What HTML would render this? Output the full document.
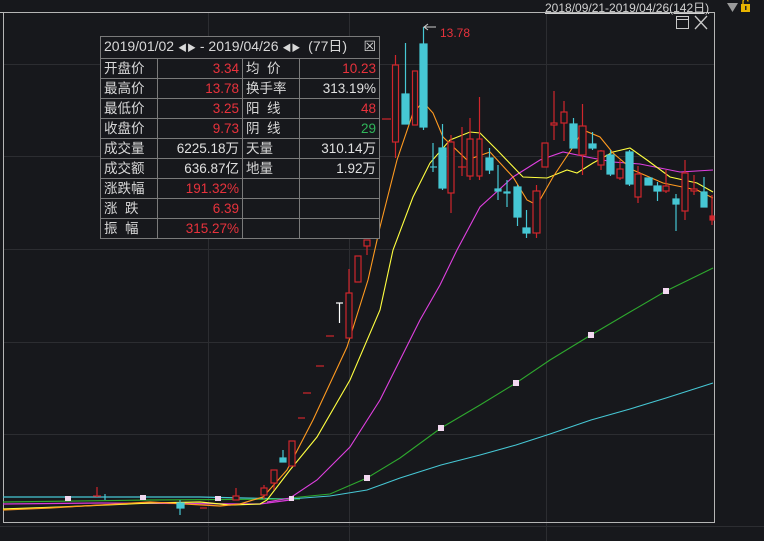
<!DOCTYPE html>
<html><head><meta charset="utf-8"><style>
html,body{margin:0;padding:0;background:#17181c;width:764px;height:541px;overflow:hidden;font-family:"Liberation Sans","Noto Sans CJK SC",sans-serif}
#tb{position:absolute;left:100px;top:36px;width:280px;border-collapse:collapse;font-size:13.5px;color:#d8d8d8;background:#17181c}
#tb td{border:1px solid #7a7a7a;height:19px;padding:0 3px;white-space:nowrap;line-height:19px}
#tb td.r{text-align:right;color:#e8323c}
#tb td.w{text-align:right;color:#e0e0e0}
#tb td.g{text-align:right;color:#2fb55a}
.top{position:absolute;left:545px;top:-1px;font-size:12px;color:#d0d0d0;text-decoration:underline}
</style></head><body>
<svg width="764" height="541" style="position:absolute;left:0;top:0">
<g stroke="#2c2d31" stroke-width="1">
<line x1="3" y1="64.5" x2="714" y2="64.5"/><line x1="3" y1="156.5" x2="714" y2="156.5"/><line x1="3" y1="249.5" x2="714" y2="249.5"/><line x1="3" y1="342.5" x2="714" y2="342.5"/><line x1="3" y1="434.5" x2="714" y2="434.5"/>
<line x1="208.5" y1="12" x2="208.5" y2="541"/><line x1="349.5" y1="12" x2="349.5" y2="541"/><line x1="546.5" y1="12" x2="546.5" y2="541"/>
<line x1="0" y1="526.5" x2="764" y2="526.5"/>
</g>
<line x1="0" y1="12.5" x2="545" y2="12.5" stroke="#bdbdbd"/>
<rect x="3.5" y="12.5" width="711" height="510" fill="none" stroke="#b5b5b5"/>
<rect x="676.5" y="16.5" width="12" height="12" fill="none" stroke="#c8c8c8"/><line x1="676" y1="19.5" x2="689" y2="19.5" stroke="#c8c8c8"/>
<path d="M695 16 L707 29 M707 16 L695 29" stroke="#c8c8c8" stroke-width="1.3"/>
<path d="M727 3 L738 3 L732.5 12Z" fill="#9a9a9a"/>
<rect x="741" y="4" width="9" height="8" fill="#e8b400"/><path d="M743 4 V1.5 A2.5 2.5 0 0 1 748 1.5" fill="none" stroke="#e8b400" stroke-width="1.3"/><rect x="745" y="6" width="1.5" height="4" fill="#222"/>
<g fill="none" stroke-width="1.2">
<polyline stroke="#46c7d4" points="3,497 200,497 290,499"/>
<polyline stroke="#2ea82e" points="3,502 150,500 300,499"/>
<polyline stroke="#d939d9" points="3,504 100,503 260,504 290,500"/>
<polyline stroke="#ffff40" points="3,509 60,507 150,503 200,502 230,505 260,504 267,500"/>
<polyline stroke="#ff9a20" points="3,510 50,508 150,502 220,506 240,504 263,497"/>
</g>
<g fill="none" stroke-width="1.1">
<polyline stroke="#46c7d4" points="290,499 330,496 367,490 400,478 441,465 480,455 516,445 550,434 591,420 630,409 666,398 713,383"/>
<polyline stroke="#2ea82e" points="290,498 330,494 367,478 400,458 441,428 480,405 516,383 550,360 591,335 630,312 666,291 713,268"/>
<polyline stroke="#e040e0" points="267,502 290,498 317,480 350,447 380,400 400,360 420,320 440,285 457,250 480,207 513,177 540,160 563,152 587,157 613,162 640,164 680,172 713,170"/>
<polyline stroke="#ffff40" points="267,500 290,470 317,437 350,380 380,310 393,250 413,197 430,163 450,140 470,132 480,133 497,150 523,177 547,178 567,170 577,173 593,163 613,152 630,148 647,160 670,177 697,183 713,192"/>
<polyline stroke="#ff9a20" points="263,497 287,470 313,420 347,347 368,280 380,227 397,160 413,113 423,102 433,113 443,137 467,160 490,152 513,177 527,200 537,205 553,177 573,147 583,130 600,137 613,153 633,170 663,183 697,190 713,198"/>
</g>
<g stroke="#d0262c" stroke-width="1.2" fill="#17181c">
<line x1="395.5" y1="55" x2="395.5" y2="158"/><rect x="392.5" y="65" width="6" height="77"/>
<rect x="412.5" y="71" width="5" height="54"/>
<line x1="451" y1="135" x2="451" y2="213"/><rect x="448" y="142" width="6" height="51"/>
<line x1="462" y1="127" x2="462" y2="176"/><line x1="458" y1="167" x2="466" y2="167"/>
<line x1="470" y1="118" x2="470" y2="180"/><rect x="467" y="139" width="6" height="37"/>
<line x1="479.5" y1="97" x2="479.5" y2="180"/><rect x="477" y="139" width="5" height="37"/>
<line x1="536.5" y1="185" x2="536.5" y2="238"/><rect x="533" y="191" width="7" height="42"/>
<rect x="542" y="143" width="6" height="24"/>
<line x1="554" y1="91" x2="554" y2="140"/><rect x="551" y="123" width="6" height="2"/>
<line x1="564" y1="101" x2="564" y2="141"/><rect x="561" y="112" width="6" height="11"/>
<line x1="582.5" y1="104" x2="582.5" y2="175"/><rect x="579" y="126" width="7" height="29"/>
<line x1="601" y1="150" x2="601" y2="170"/><rect x="598" y="151" width="6" height="14"/>
<line x1="620" y1="160" x2="620" y2="180"/><rect x="617" y="169" width="6" height="9"/>
<line x1="638" y1="166" x2="638" y2="203"/><rect x="635" y="174" width="6" height="23"/>
<line x1="666" y1="170" x2="666" y2="193"/><rect x="663" y="186" width="6" height="5"/>
<line x1="685" y1="160" x2="685" y2="220"/><rect x="682" y="173" width="6" height="38"/>
<line x1="694" y1="175" x2="694" y2="195"/><rect x="691" y="189" width="6" height="2"/>
<line x1="712" y1="195" x2="712" y2="225"/><rect x="710" y="216" width="4" height="4" fill="#d0262c"/>
<line x1="382" y1="119" x2="391" y2="119"/>
<line x1="349" y1="269" x2="349" y2="300"/><rect x="346" y="293" width="6" height="45"/>
<rect x="355" y="256" width="6" height="26"/>
<line x1="367" y1="240" x2="367" y2="255"/><rect x="364" y="240" width="6" height="6"/>
<line x1="326" y1="336" x2="334" y2="336"/><line x1="316" y1="366" x2="324" y2="366"/><line x1="303" y1="393" x2="311" y2="393"/><line x1="298" y1="418" x2="305" y2="418"/>
<rect x="289" y="441" width="6" height="25"/>
<rect x="271" y="470" width="6" height="13"/><line x1="274" y1="483" x2="274" y2="490"/>
<line x1="264" y1="485" x2="264" y2="499"/><rect x="261" y="488" width="6" height="7"/>
<line x1="236" y1="488" x2="236" y2="500"/><rect x="233" y="496" width="6" height="4"/>
<line x1="97" y1="487" x2="97" y2="497"/><line x1="93" y1="496" x2="101" y2="496"/>
<line x1="200" y1="508" x2="207" y2="508"/>
</g>
<g fill="#46c7d4" stroke="#46c7d4" stroke-width="1.2">
<line x1="405.5" y1="43" x2="405.5" y2="94"/><rect x="402" y="94" width="7" height="30"/>
<line x1="423.5" y1="27" x2="423.5" y2="130"/><rect x="420" y="44" width="7" height="83"/>
<line x1="433" y1="143" x2="433" y2="172"/><line x1="430" y1="167" x2="437" y2="167"/>
<line x1="442.5" y1="124" x2="442.5" y2="190"/><rect x="439" y="148" width="7" height="40"/>
<line x1="489.5" y1="148" x2="489.5" y2="174"/><rect x="486" y="158" width="7" height="12"/>
<line x1="498" y1="165" x2="498" y2="200"/><rect x="495" y="189" width="6" height="2"/>
<line x1="507" y1="180" x2="507" y2="207"/><rect x="504" y="192" width="6" height="1"/>
<line x1="517.5" y1="185" x2="517.5" y2="226"/><rect x="514" y="187" width="7" height="30"/>
<line x1="526.5" y1="210" x2="526.5" y2="238"/><rect x="523" y="228" width="7" height="5"/>
<line x1="573.5" y1="118" x2="573.5" y2="148"/><rect x="570" y="124" width="7" height="24"/>
<line x1="592.5" y1="132" x2="592.5" y2="150"/><rect x="589" y="144" width="7" height="4"/>
<line x1="610.5" y1="150" x2="610.5" y2="176"/><rect x="607" y="155" width="7" height="19"/>
<line x1="629.5" y1="150" x2="629.5" y2="186"/><rect x="626" y="152" width="7" height="32"/>
<rect x="645" y="178" width="7" height="7"/>
<line x1="657.5" y1="182" x2="657.5" y2="201"/><rect x="654" y="186" width="7" height="5"/>
<line x1="676" y1="194" x2="676" y2="231"/><rect x="673" y="199" width="6" height="5"/>
<line x1="704" y1="177" x2="704" y2="207"/><rect x="701" y="192" width="6" height="15"/>
<line x1="283" y1="450" x2="283" y2="462"/><rect x="280" y="458" width="6" height="4"/>
<line x1="180" y1="500" x2="180" y2="515"/><rect x="177" y="503" width="7" height="5"/>
<line x1="105" y1="494" x2="105" y2="500"/>
</g>
<line x1="339.5" y1="303" x2="339.5" y2="323" stroke="#fff" stroke-width="1.2"/><line x1="336" y1="303" x2="343" y2="303" stroke="#fff" stroke-width="1.2"/>
<g fill="#f2d8f0"><rect x="364" y="475" width="6" height="6"/><rect x="438" y="425" width="6" height="6"/><rect x="513" y="380" width="6" height="6"/><rect x="588" y="332" width="6" height="6"/><rect x="663" y="288" width="6" height="6"/><rect x="289" y="496" width="5" height="5"/>
<rect x="65" y="496" width="6" height="5"/><rect x="140" y="495" width="6" height="5"/><rect x="215" y="496" width="6" height="5"/></g>
<path d="M424 27 L436 27 M428 24 L424 27 L428 30" stroke="#ccc" fill="none" stroke-width="1"/>
<text x="440" y="37" font-size="12" fill="#e8323c" font-family="Liberation Sans">13.78</text>
</svg>
<div class="top">2018/09/21-2019/04/26(142日)</div>
<table id="tb">
<tr><td colspan="4" style="height:21px;font-size:14px">2019/01/02 <span style="font-size:9px">◀▶</span> - 2019/04/26 <span style="font-size:9px">◀▶</span> &nbsp;(77日) <span style="float:right">☒</span></td></tr>
<tr><td style="width:50px">开盘价</td><td class="r" style="width:78px">3.34</td><td style="width:50px">均&nbsp;&nbsp;价</td><td class="r">10.23</td></tr>
<tr><td>最高价</td><td class="r">13.78</td><td>换手率</td><td class="w">313.19%</td></tr>
<tr><td>最低价</td><td class="r">3.25</td><td>阳&nbsp;&nbsp;线</td><td class="r">48</td></tr>
<tr><td>收盘价</td><td class="r">9.73</td><td>阴&nbsp;&nbsp;线</td><td class="g">29</td></tr>
<tr><td>成交量</td><td class="w">6225.18万</td><td>天量</td><td class="w">310.14万</td></tr>
<tr><td>成交额</td><td class="w">636.87亿</td><td>地量</td><td class="w">1.92万</td></tr>
<tr><td>涨跌幅</td><td class="r">191.32%</td><td></td><td></td></tr>
<tr><td>涨&nbsp;&nbsp;跌</td><td class="r">6.39</td><td></td><td></td></tr>
<tr><td>振&nbsp;&nbsp;幅</td><td class="r">315.27%</td><td></td><td></td></tr>
</table>
</body></html>
